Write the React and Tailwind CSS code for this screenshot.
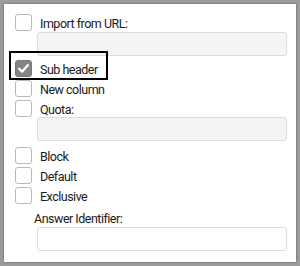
import React from "react"

function Box({ checked }) {
  if (checked) {
    return (
      <span className="w-[17px] h-[17px] shrink-0 rounded-[3px] bg-[#858585] border border-[#777] flex items-center justify-center">
        <svg width="13" height="13" viewBox="0 0 13 13">
          <path d="M2.2 6.8 L5.2 9.6 L10.8 3.2" fill="none" stroke="#fff" strokeWidth="2.3" strokeLinecap="round" strokeLinejoin="round" />
        </svg>
      </span>
    )
  }
  return <span className="w-[17px] h-[17px] shrink-0 rounded-[3px] bg-white border border-[#b8b8b8]" />
}

function Row({ label, checked, className = "" }) {
  return (
    <div className={"h-[20px] flex items-center gap-[8px] pl-[11px] " + className}>
      <Box checked={checked} />
      <span className="mt-[4px] text-[12.5px] leading-none tracking-[-0.5px] text-[#1a1a1a]">{label}</span>
    </div>
  )
}

export default function App() {
  return (
    <div className="w-[300px] h-[266px] bg-[#9c9c9c] p-[4px]" style={{ fontFamily: "Roboto, 'Liberation Sans', sans-serif" }}>
      <div className="relative w-[292px] h-[258px] bg-white shadow-[0_0_2px_rgba(0,0,0,0.45)] pt-[8px] flex flex-col">
        <Row label="Import from URL:" />
        <div className="ml-[33px] mr-[9px] h-[24px] rounded-[3px] border border-[#dcdcdc] bg-[#f4f4f4]" />

        <Row label="Sub header" checked className="mt-[2px]" />
        <Row label="New column" />
        <Row label="Quota:" />
        <div className="ml-[33px] mr-[9px] mt-[-1px] h-[24px] rounded-[3px] border border-[#dcdcdc] bg-[#f4f4f4]" />

        <Row label="Block" className="mt-[4px]" />
        <Row label="Default" />
        <Row label="Exclusive" />

        <div className="mt-[6px] ml-[30px] h-[16px] flex items-center text-[12.5px] leading-none tracking-[-0.5px] text-[#1a1a1a]">
          Answer Identifier:
        </div>
        <div className="ml-[33px] mr-[9px] h-[24px] rounded-[3px] border border-[#dcdcdc] bg-white" />

        {/* highlight */}
        <div className="absolute left-[5px] top-[47px] w-[99px] h-[29px] border-2 border-black" />
      </div>
    </div>
  )
}
